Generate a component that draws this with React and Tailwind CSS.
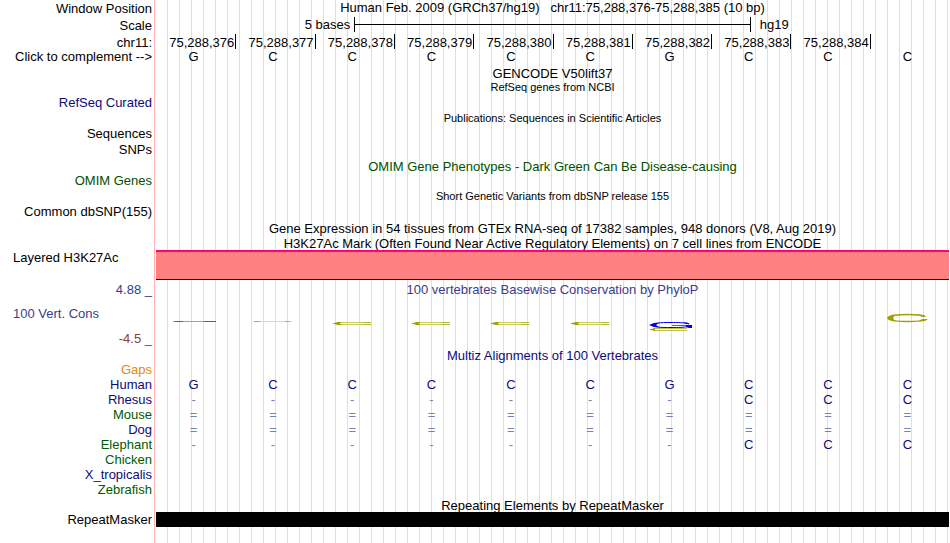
import React, { useState } from "react";

const bases = ["G", "C", "C", "C", "C", "C", "G", "C", "C", "C"];
const complements = { A: "T", T: "A", G: "C", C: "G" };

const positions = [
  "75,288,376",
  "75,288,377",
  "75,288,378",
  "75,288,379",
  "75,288,380",
  "75,288,381",
  "75,288,382",
  "75,288,383",
  "75,288,384",
  "",
];

const species = [
  { name: "Gaps", color: "text-[#e08a10]", row: "          " },
  { name: "Human", color: "text-[#0c0c78]", row: "GCCCCCGCCC" },
  { name: "Rhesus", color: "text-[#0c0c78]", row: "-------CCC" },
  { name: "Mouse", color: "text-[#005a00]", row: "==========" },
  { name: "Dog", color: "text-[#0c0c78]", row: "==========" },
  { name: "Elephant", color: "text-[#005a00]", row: "-------CCC" },
  { name: "Chicken", color: "text-[#005a00]", row: "          " },
  { name: "X_tropicalis", color: "text-[#0c0c78]", row: "          " },
  { name: "Zebrafish", color: "text-[#005a00]", row: "          " },
];

// Conservation logo drawn for each base
const logos = [
  "flatBlue",
  "flatOlive",
  "thin",
  "thin",
  "thin",
  "thin",
  "stack",
  "",
  "",
  "ring",
];

// Label column on the left, data column on the right
const Track = ({ label, children }) => (
  <div className="grid grid-cols-[154px_1fr]">
    <div className="pr-0.5 text-right">{label}</div>
    <div className="min-w-0 pl-0.5">{children}</div>
  </div>
);

const Title = ({ children, className = "h-[15px]" }) => (
  <Track>
    <h2 className={`text-center whitespace-nowrap ${className}`}>{children}</h2>
  </Track>
);

// Collapsed track: small or coloured title with its labels underneath
const EmptyTrack = ({
  title,
  titleClass = "text-[11px] leading-[13px]",
  labels,
  labelColor = "",
}) => (
  <section>
    <Title className={`h-[14px] ${titleClass}`}>{title}</Title>
    <Track
      label={
        <div className={`flex flex-col gap-px pb-0.5 ${labelColor}`}>
          {labels.map((label) => (
            <span key={label}>{label}</span>
          ))}
        </div>
      }
    />
  </section>
);

const Logo = ({ kind }) => (
  <svg width="44" height="20" viewBox="0 0 44 20" fill="none">
    {kind === "flatBlue" && (
      <>
        <path d="M0 8.5H43" stroke="#9696f5" />
        <path d="M2 8.5H10M31 8.5H43" stroke="#5050dc" />
      </>
    )}
    {kind === "flatOlive" && (
      <>
        <path d="M1 8.5H40" stroke="#dcdcaa" />
        <path d="M2 8.5H8M33 8.5H38" stroke="#b4b446" />
      </>
    )}
    {kind === "thin" && (
      <>
        <path d="M5 9.5H38M5 11.5H38" stroke="#c8c864" />
        <path d="M0 10.5L6 9H9V10L7 10.5L9 11V12H6Z" fill="#a0a000" />
        <path d="M32 9.5H39M32 11.5H39" stroke="#b4b43c" />
      </>
    )}
    {kind === "stack" && (
      <>
        <path
          d="M40 11C36 9.5 28 9.5 22 9.5C11 9.5 4 10 3 12C4 14.5 12 14.5 22 14.5C30 14.5 35 14.5 39 13.5"
          stroke="#0000f0"
        />
        <path d="M0 12L5 10H10L7 12L10 14H5Z" fill="#0000f0" />
        <path d="M34 9.5H38L41 11H37Z" fill="#0000f0" />
        <path d="M23 12.5H38" stroke="#5050ff" />
        <path d="M37 12H43V15H40L37 14Z" fill="#0000f0" />
        <path d="M5 15.5H38M5 17.5H38" stroke="#c0c050" />
        <path d="M0 16.5L6 15V18Z" fill="#a0a000" />
      </>
    )}
    {kind === "ring" && (
      <>
        <path
          d="M38 3.5C34 1.5 28 1.5 21 1.5C10 1.5 3 2.5 3 5C3 7.5 10 8.5 21 8.5C29 8.5 35 8.5 39 6.5"
          stroke="#a0a000"
          strokeWidth="1.3"
        />
        <path
          d="M0 5C1 3 4 1.5 10 1.5C5 3.5 5 6.5 10 8.5C4 8.5 1 7 0 5Z"
          fill="#a0a000"
        />
        <path
          d="M31 1.5L37 2L39 4H35ZM35 6H41L38 8L31 8.5Z"
          fill="#a0a000"
        />
      </>
    )}
  </svg>
);

const symbolColor = (symbol) =>
  symbol === "-" || symbol === "=" ? "text-[#7882b4]" : "text-[#0c0c78]";

const App = () => {
  const [complement, setComplement] = useState(false);

  return (
    <main className="min-h-screen overflow-hidden bg-white bg-[linear-gradient(to_right,#fff_154px,#ffb0b0_154px,#ffb0b0_155px,#fff_155px,#fff_156px,transparent_156px),linear-gradient(to_right,transparent_11px,#dcdcf8_11px)] bg-[size:auto,12px_100%] pr-px font-['Liberation_Sans',Arial,sans-serif] text-[13px] leading-[15px] text-black">
      {/* Window position and scale */}
      <Track label={<div className="pt-px">Window Position</div>}>
        <h1 className="h-[17px] text-center whitespace-pre">
          Human Feb. 2009 (GRCh37/hg19)   chr11:75,288,376-75,288,385 (10 bp)
        </h1>
      </Track>
      <Track label={<div className="pt-px">Scale</div>}>
        <div className="flex h-[17px]">
          <span className="w-1/4 pr-1 text-right">5 bases</span>
          <div className="flex h-[15px] w-1/2 items-center border-x border-black">
            <div className="h-px w-full bg-black" />
          </div>
          <span className="pl-[9px]">hg19</span>
        </div>
      </Track>

      {/* Base positions */}
      <table className="block pb-0.5">
        <tbody className="block">
          <tr className="grid h-[15px] grid-cols-[156px_repeat(10,1fr)] leading-[17px]">
            <th className="pr-1 text-right font-normal">chr11:</th>
            {positions.map((position, i) => (
              <td
                key={i}
                className={`h-[15px] pr-px text-right ${i > 0 ? "border-l border-black" : ""}`}
              >
                {position}
              </td>
            ))}
          </tr>
          <tr className="grid h-[15px] grid-cols-[156px_repeat(10,1fr)]">
            <th className="pr-1 text-right font-normal">
              <button
                className="cursor-pointer whitespace-nowrap"
                onClick={() => setComplement(!complement)}
              >
                Click to complement --&gt;
              </button>
            </th>
            {bases.map((base, i) => (
              <td key={i} className="pr-1 text-center">
                {complement ? complements[base] : base}
              </td>
            ))}
          </tr>
        </tbody>
      </table>

      <Title>GENCODE V50lift37</Title>
      <EmptyTrack
        title="RefSeq genes from NCBI"
        labels={["RefSeq Curated"]}
        labelColor="text-[#0c0c78]"
      />
      <EmptyTrack
        title="Publications: Sequences in Scientific Articles"
        labels={["Sequences", "SNPs"]}
      />
      <EmptyTrack
        title="OMIM Gene Phenotypes - Dark Green Can Be Disease-causing"
        titleClass="text-[#005000]"
        labels={["OMIM Genes"]}
        labelColor="text-[#005000]"
      />
      <EmptyTrack
        title="Short Genetic Variants from dbSNP release 155"
        labels={["Common dbSNP(155)"]}
      />
      <Title>
        Gene Expression in 54 tissues from GTEx RNA-seq of 17382 samples, 948
        donors (V8, Aug 2019)
      </Title>

      {/* H3K27Ac */}
      <Title className="h-[14px]">
        H3K27Ac Mark (Often Found Near Active Regulatory Elements) on 7 cell
        lines from ENCODE
      </Title>
      <Track label={<div className="pl-[13px] text-left">Layered H3K27Ac</div>}>
        <div className="h-[30px] border-t-2 border-b border-t-[#ff0080] border-b-[#200020] bg-[#ff8080]" />
      </Track>

      {/* Conservation */}
      <Track
        label={
          <div className="pt-0.5 text-[#3c3c8c]">
            <div>4.88 _</div>
            <div className="pt-[9px] pb-2.5 pl-[13px] text-left">
              100 Vert. Cons
            </div>
            <div className="pb-0.5 text-[#8c3c3c]">-4.5 _</div>
          </div>
        }
      >
        <h2 className="pt-0.5 text-center text-[#3c3c8c]">
          100 vertebrates Basewise Conservation by PhyloP
        </h2>
        <div className="grid grid-cols-10 pt-4">
          {logos.map((kind, i) => (
            <div key={i} className="pl-[17px]">
              <Logo kind={kind} />
            </div>
          ))}
        </div>
      </Track>

      {/* Multiz alignments */}
      <Title className="h-[14px] text-[#0c0c78]">
        Multiz Alignments of 100 Vertebrates
      </Title>
      <table className="block">
        <tbody className="block">
          {species.map((item) => (
            <tr
              key={item.name}
              className="grid h-[15px] grid-cols-[156px_repeat(10,1fr)]"
            >
              <th className={`pr-1 text-right font-normal ${item.color}`}>
                {item.name}
              </th>
              {item.row.split("").map((symbol, i) => (
                <td key={i} className={`pr-1 text-center ${symbolColor(symbol)}`}>
                  {symbol}
                </td>
              ))}
            </tr>
          ))}
        </tbody>
      </table>

      {/* RepeatMasker */}
      <Title className="h-[15px] leading-[17px]">
        Repeating Elements by RepeatMasker
      </Title>
      <Track label="RepeatMasker">
        <div className="h-[15px] bg-black" />
      </Track>
    </main>
  );
};

export default App;
